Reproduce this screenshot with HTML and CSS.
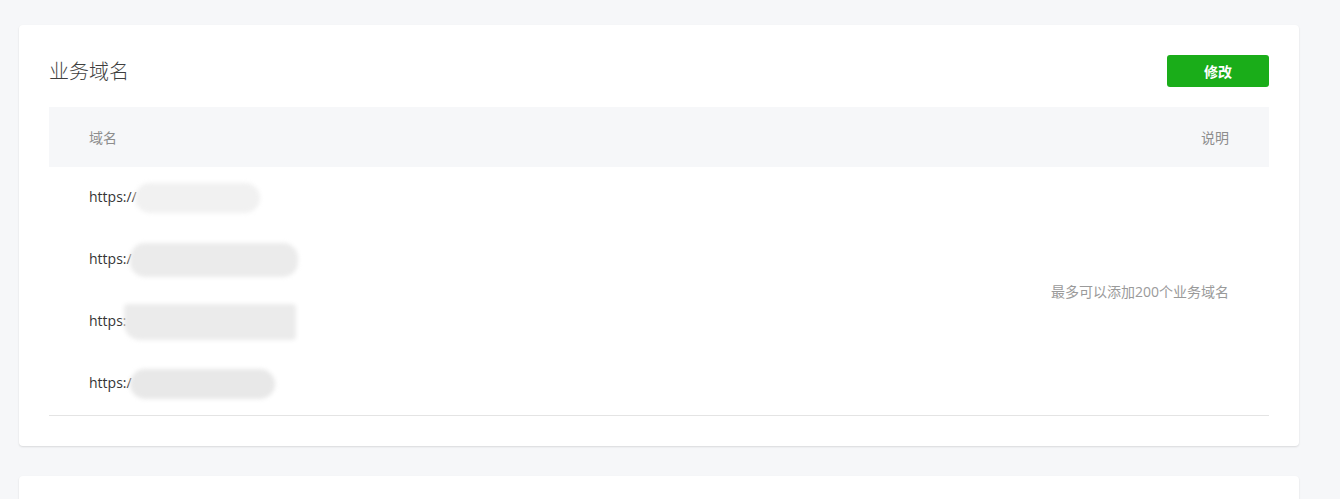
FILE: index.html
```html
<!DOCTYPE html>
<html lang="zh-CN">
<head>
<meta charset="utf-8">
<title>业务域名</title>
<link rel="stylesheet" href="styles.css">
</head>
<body>
<div class="page">
  <section class="card">
    <div class="card-head">
      <h2 class="card-title">业务域名</h2>
      <button class="btn-primary">修改</button>
    </div>
    <table class="domain-table">
      <thead>
        <tr>
          <th class="col-domain">域名</th>
          <th class="col-desc">说明</th>
        </tr>
      </thead>
      <tbody>
        <tr>
          <td class="col-domain">https://<span class="mask mask-a"></span></td>
          <td class="col-desc" rowspan="4">最多可以添加200个业务域名</td>
        </tr>
        <tr>
          <td class="col-domain">https:/<span class="mask mask-b"></span></td>
        </tr>
        <tr>
          <td class="col-domain">https:<span class="mask mask-c"></span></td>
        </tr>
        <tr>
          <td class="col-domain">https:/<span class="mask mask-d"></span></td>
        </tr>
      </tbody>
    </table>
  </section>
  <section class="card card-next"></section>
</div>
</body>
</html>
```
FILE: styles.css
```css
* { box-sizing: border-box; }
html, body {
  margin: 0;
  padding: 0;
  background: #f6f7f9;
  font-family: "Open Sans", "Noto Sans CJK SC", sans-serif;
  color: #353535;
  overflow: hidden;
}
.page {
  padding: 25px 0 0 19px;
  width: 1299px;
}
.card {
  background: #fff;
  border-radius: 4px;
  box-shadow: 0 1px 2px rgba(0, 0, 0, 0.12);
  padding: 30px 30px 30px;
}
.card-next {
  margin-top: 30px;
  height: 60px;
}
.card-head {
  display: flex;
  align-items: center;
  justify-content: space-between;
  height: 32px;
  margin-bottom: 20px;
}
.card-title {
  margin: 0;
  font-family: "Noto Sans CJK SC", sans-serif;
  font-size: 20px;
  font-weight: 300;
  color: #3e3e3e;
  line-height: 32px;
}
.btn-primary {
  width: 102px;
  height: 32px;
  border: 0;
  border-radius: 3px;
  background: #1aad19;
  color: #fff;
  font-family: "Noto Sans CJK SC", sans-serif;
  font-size: 14px;
  font-weight: 700;
  padding: 0;
}
.domain-table {
  width: 100%;
  border-collapse: collapse;
  font-size: 14px;
}
.domain-table thead th {
  background: #f6f7f9;
  height: 60px;
  font-weight: 400;
  color: #8d8d8d;
  font-family: "Noto Sans CJK SC", sans-serif;
  font-size: 14px;
  padding: 0 40px;
}
.domain-table th.col-domain,
.domain-table td.col-domain { text-align: left; }
.domain-table th.col-desc,
.domain-table td.col-desc { text-align: right; }
.domain-table tbody td {
  height: 62px;
  padding: 0 40px;
  vertical-align: middle;
}
.domain-table tbody td.col-desc {
  color: #9a9a9a;
  font-size: 14px;
  padding-top: 0;
}
.domain-table tbody {
  border-bottom: 1px solid #e4e4e4;
}
.mask {
  display: inline-block;
  vertical-align: middle;
  height: 30px;
  border-radius: 15px;
  background: #ececec;
  filter: blur(2px);
  margin-left: -2px;
}
.mask-a { width: 125px; background: #f1f1f1; }
.mask-b { width: 168px; height: 34px; background: #ebebeb; }
.mask-c { width: 172px; height: 36px; border-radius: 4px 4px 4px 16px; background: #ebebeb; }
.mask-d { width: 145px; height: 30px; background: #e8e8e8; }
```
